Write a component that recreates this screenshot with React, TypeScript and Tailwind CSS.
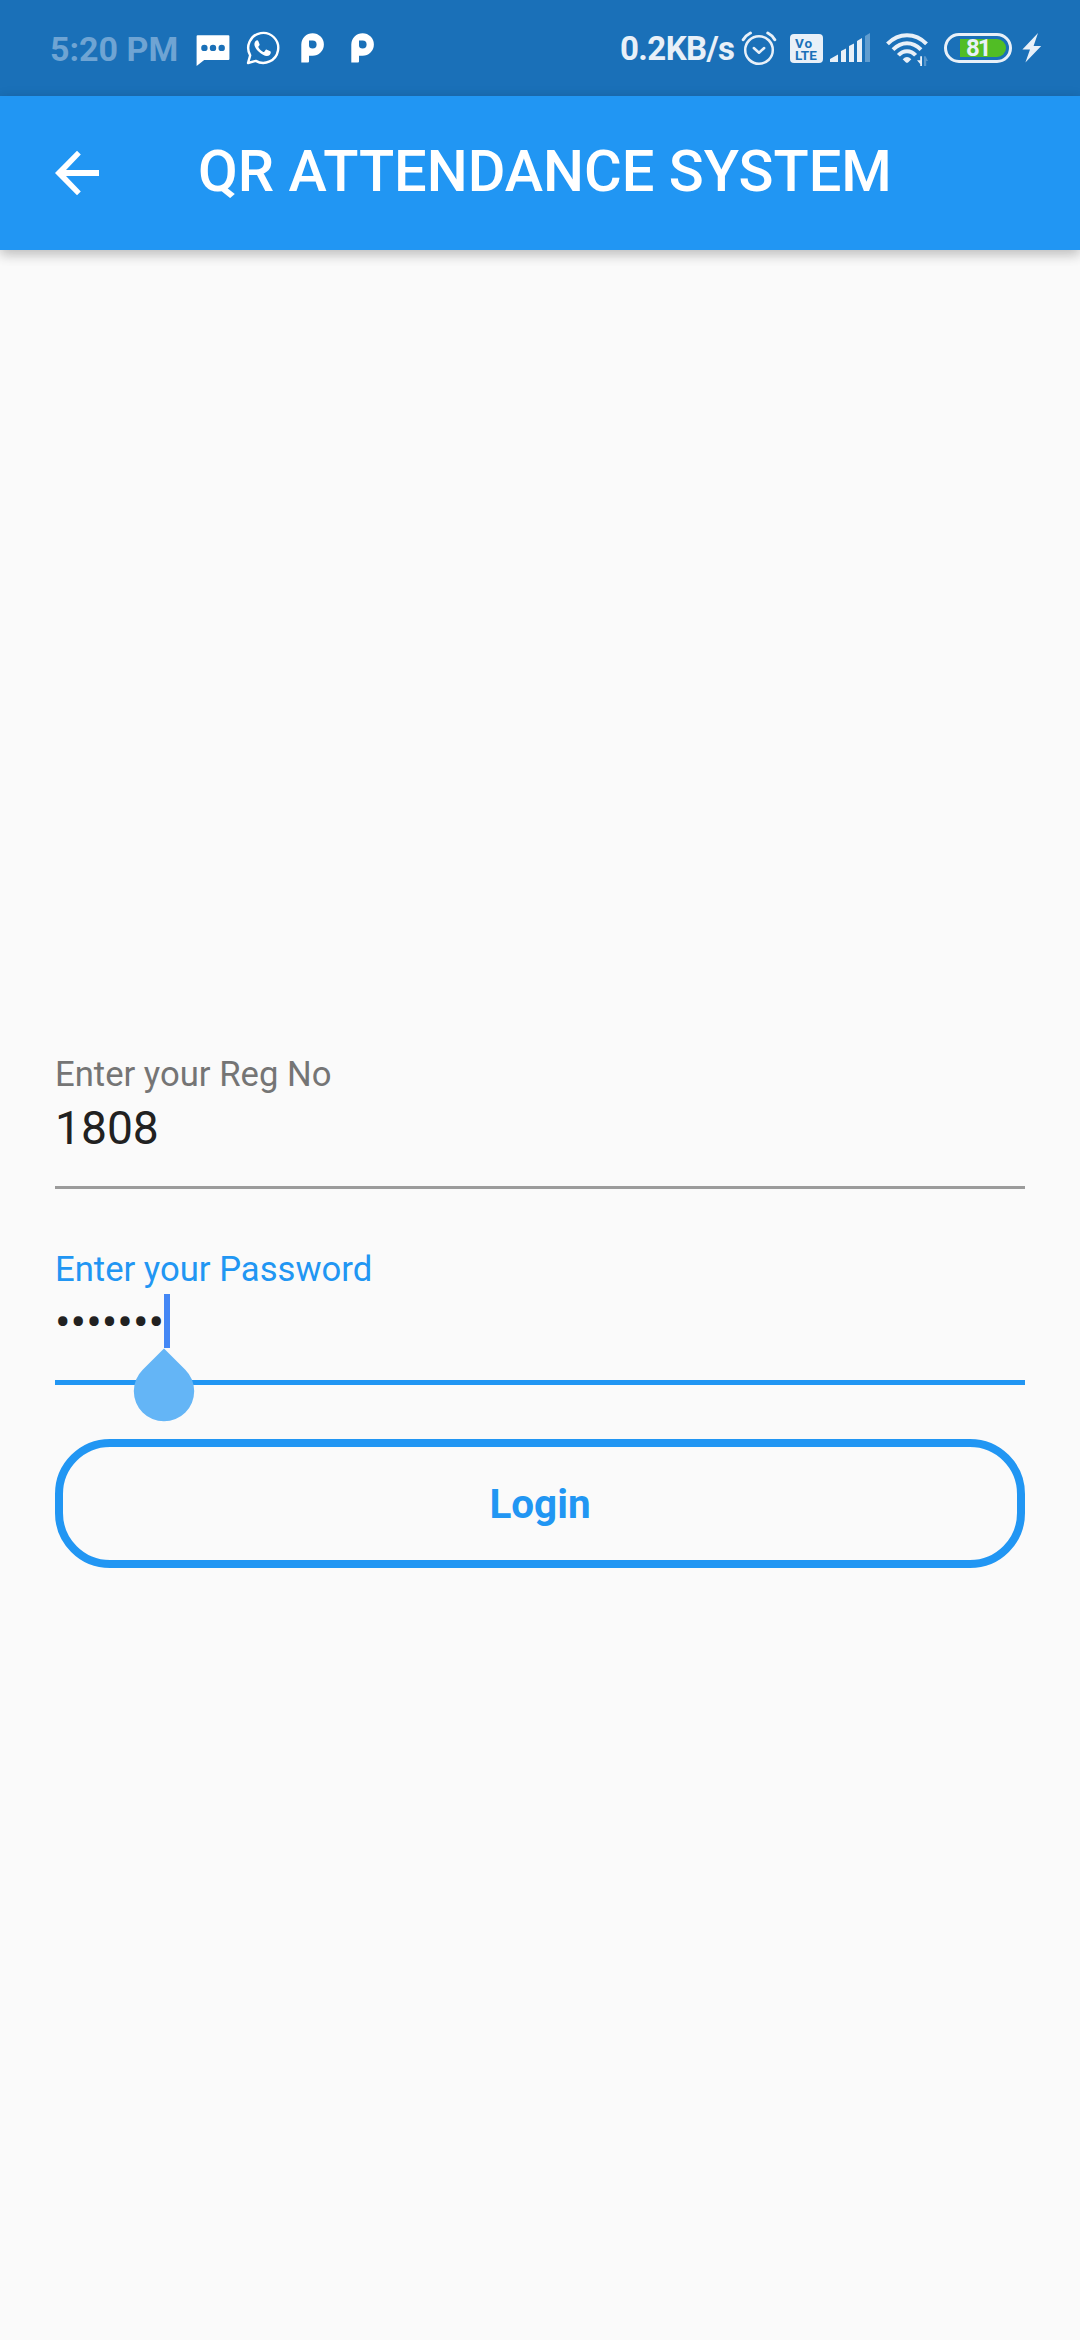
import React from "react";

const ChatIcon = () => (
  <svg className="block h-[32px] w-[34px]" viewBox="0 0 34 32" fill="#fff">
    <path
      fillRule="evenodd"
      d="M1.6 .3H32.4Q33.4 .3 33.4 1.3V24Q33.4 25 32.4 25H8.2L.6 31V1.3Q.6 .3 1.6 .3ZM8.4 9.7a3.2 3.2 0 1 0 0 6.4a3.2 3.2 0 0 0 0-6.4ZM17 9.7a3.2 3.2 0 1 0 0 6.4a3.2 3.2 0 0 0 0-6.4ZM25.7 9.7a3.2 3.2 0 1 0 0 6.4a3.2 3.2 0 0 0 0-6.4Z"
    />
  </svg>
);

const WhatsAppIcon = () => (
  <svg className="block h-[34px] w-[34px]" viewBox="0 0 34 34" fill="none">
    <path
      d="M2 32L4.2 24.3A15 15 0 1 1 9.8 29.9Z"
      stroke="#fff"
      strokeWidth="2.4"
      strokeLinejoin="round"
    />
    <path
      d="M11.2 9.2C10.2 9.2 8.4 10.8 8.4 13.2C8.4 15.6 10.2 18.2 12.8 20.8C15.6 23.5 18.6 25 20.8 25C23.2 25 24.8 23.4 24.8 21.3C24.8 20.6 24.4 20.4 23.8 20.1L20.9 18.7C20.3 18.5 20 18.6 19.6 19.1L18.3 20.7C18 21 17.7 21.1 17.2 20.9C15.2 20 13.5 18.2 12.4 16.3C12.2 15.9 12.3 15.7 12.6 15.3L13.5 14.2C13.7 13.8 13.7 13.6 13.5 13.2L12.3 10C12.1 9.4 11.8 9.2 11.2 9.2Z"
      fill="#fff"
    />
  </svg>
);

const ParkingIcon = () => (
  <svg className="block h-[30px] w-[23px]" viewBox="0 0 23 30" fill="#fff">
    <path
      fillRule="evenodd"
      d="M.3 29.5V11.5A11.3 11.3 0 1 1 11.5 22.8H8V28.5Q8 29.5 7 29.5ZM8 7.4V12.6Q8 15.6 11.6 15.6A4 4 0 0 0 11.6 7.6Z"
    />
  </svg>
);

const AlarmIcon = () => (
  <svg className="block h-[35px] w-[36px]" viewBox="0 0 36 35" fill="none" stroke="#e8f0f8" strokeLinecap="round">
    <circle cx="18" cy="19" r="13.8" strokeWidth="2.5" />
    <path d="M2.2 8.7Q5 4.2 9.4 2" strokeWidth="3" />
    <path d="M26.8 2Q31.2 4.2 33.8 8.7" strokeWidth="3" />
    <path d="M12.8 17L18 21.7L23.2 17" strokeWidth="2.5" strokeLinejoin="round" />
  </svg>
);

const VolteBadge = () => (
  <div className="flex h-[29px] w-[33px] flex-col rounded-[4px] bg-[#e8f0f8] pt-[3px] pl-[5px] text-[13.5px] leading-[12px] font-bold text-[#1a70b8]">
    <span className="tracking-[1px]">Vo</span>
    <span className="-mr-1 whitespace-nowrap">LTE</span>
  </div>
);

const SignalIcon = () => (
  <svg className="block h-[29px] w-[41px]" viewBox="0 0 41 29" fill="#e8f0f8">
    <path d="M0 29V26L8 21.5V29ZM11 29V18L16 15.5V29ZM19 29V13L24 10.5V29ZM27 29V8L32 5V29Z" />
    <path d="M35 29V3L40 0V29Z" opacity=".35" />
  </svg>
);

const WifiIcon = () => (
  <svg className="block h-[34px] w-[43px]" viewBox="0 0 43 34" fill="none" stroke="#e8f0f8">
    <path d="M1.5 10.8Q10 2.2 21 2.2T40.5 10.8" strokeWidth="4" />
    <path d="M7 16.6Q13.5 10.3 21 10.3T35 16.6" strokeWidth="4" />
    <path d="M12.4 22.3Q16 18.2 21 18.2T29.6 22.3" strokeWidth="4" />
    <path d="M16.7 26.2Q21 22 25.3 26.2L22.3 29.2Q21 30.3 19.7 29.2Z" fill="#e8f0f8" stroke="none" />
    <path d="M36 23.3V33H34.2V31L31 27.3H34.2V23.3Z" fill="#e8f0f8" stroke="none" />
    <path d="M38 33V23.3H39.6L42 28H40.2V33Z" fill="#e8f0f8" stroke="none" opacity=".3" />
  </svg>
);

const BoltIcon = () => (
  <svg className="block h-[30px] w-[20px]" viewBox="0 0 20 30" fill="#e8f0f8">
    <path d="M16 0L.4 16.6H8L3.4 29.5L19.2 13H11.6Z" />
  </svg>
);

const StatusBar = () => (
  <div className="flex h-24 w-full items-start bg-[#1a70b8]">
    <div className="flex items-start pl-[50px]">
      <span className="mt-[29px] w-[146px] text-[34px] leading-[40px] font-bold whitespace-nowrap text-[#6fa4d3]">5:20 PM</span>
      <span className="mt-[35px]"><ChatIcon /></span>
      <span className="mt-[31px] ml-[16px]"><WhatsAppIcon /></span>
      <span className="mt-[33px] ml-[21px]"><ParkingIcon /></span>
      <span className="mt-[33px] ml-[27px]"><ParkingIcon /></span>
    </div>
    <div className="ml-auto flex items-start pr-[38px] text-[#e8f0f8]">
      <span className="mt-[29px] w-[121px] text-[33px] leading-[40px] font-bold tracking-[-0.6px] whitespace-nowrap">0.2KB/s</span>
      <span className="mt-[31px]"><AlarmIcon /></span>
      <span className="mt-[34px] ml-[13px]"><VolteBadge /></span>
      <span className="mt-[33px] ml-[7px]"><SignalIcon /></span>
      <span className="mt-[33px] ml-[15px]"><WifiIcon /></span>
      <div className="mt-[33px] ml-[15px] flex h-[30px] w-[68px] rounded-full border-3 border-[#e8f0f8] py-[3px] pr-[3px] pl-[13px]">
        <div className="flex h-[18px] w-full items-center rounded-l-[2px] rounded-r-full bg-[#51bd25] pl-[6px] text-[24px] leading-[18px] font-bold tracking-[-2px]">81</div>
      </div>
      <span className="mt-[33px] ml-[10px]"><BoltIcon /></span>
    </div>
  </div>
);

const AppBar = () => (
  <header className="flex h-[154px] items-start bg-[#2196f3] shadow-[0_5px_11px_rgba(0,0,0,0.17),0_3px_14px_rgba(0,0,0,0.1)]">
    <svg className="mt-[54px] ml-[55px] h-[46px] w-[45px]" viewBox="0 0 45 46" fill="#fff">
      <path d="M44 20V26H11L25.8 41.4L22 45.2L0 22.9L22 .8L25.8 4.6L11 20Z" />
    </svg>
    <h1 className="mt-[41px] ml-[98px] text-[57.75px] leading-[68px] font-medium whitespace-nowrap text-white">QR ATTENDANCE SYSTEM</h1>
  </header>
);

export default function App() {
  return (
    <div className="flex h-[2340px] w-[1080px] flex-col overflow-hidden bg-[#fafafa] font-['Roboto',sans-serif]">
      <StatusBar />
      <AppBar />
      <main className="flex flex-col px-[55px] pt-[804px]">
        <div className="flex h-[135px] flex-col border-b-3 border-[#9b9b9b]">
          <label className="text-[34.65px] leading-[41px] whitespace-nowrap text-[#757575]">Enter your Reg No</label>
          <span className="mt-[5px] text-[46.2px] leading-[56px] text-[#212121]">1808</span>
        </div>
        <div className="relative mt-[60px] flex h-[136px] flex-col border-b-[5px] border-[#2196f3]">
          <label className="text-[34.65px] leading-[41px] whitespace-nowrap text-[#2196f3]">Enter your Password</label>
          <div className="mt-[4px] flex h-[56px] items-start">
            <span className="text-[46.2px] leading-[56px] text-[#212121]">•••••••</span>
          </div>
          <span className="absolute top-[45px] left-[109px] h-[54px] w-[5.5px] bg-[#4487f5]" />
          <svg className="absolute top-[99px] left-[78px] h-[74px] w-[62px]" viewBox="0 0 62 74" fill="#64b5f6">
            <path d="M31 .5L52.3 21.7A30.2 30.2 0 1 1 9.7 21.7Z" />
          </svg>
        </div>
        <button className="mt-[54px] flex h-[129px] items-center justify-center rounded-[55px] border-8 border-[#2196f3] pt-[2px] text-[40.4px] leading-[48px] font-bold text-[#2196f3]">Login</button>
      </main>
    </div>
  );
}
